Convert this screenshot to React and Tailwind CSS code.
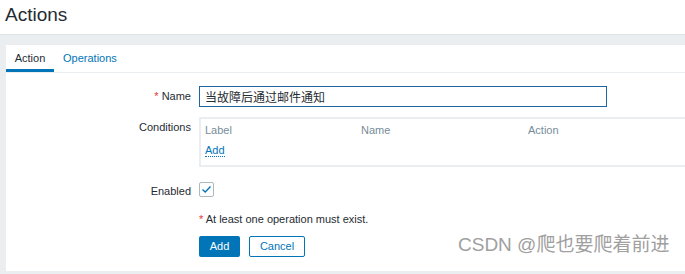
const App = () => {
  return (
    <div className="w-[685px] h-[274px] overflow-hidden bg-[#ebeef0] font-['Liberation_Sans',Arial,'Noto_Sans_CJK_SC',sans-serif] text-[11px] text-[#1f2c33]">
      <div className="h-[35px] bg-white border-b border-[#dfe4e7] pl-[5px] pt-[3px]">
        <h1 className="text-[19px] leading-[24px]">Actions</h1>
      </div>

      <div className="ml-[6px] mt-[10px] bg-white h-[226px] relative">
        {/* tabs */}
        <div className="flex h-[28px] border-b border-[#ebeef0]">
          <div className="w-[48px] flex items-center justify-center border-b-[3px] border-[#0275b8] pt-[3px]">
            Action
          </div>
          <div className="px-[9px] flex items-center text-[#0275b8]">Operations</div>
        </div>

        {/* form */}
        <div className="grid grid-cols-[185px_1fr] gap-x-[8px] mt-[13px]">
          <div className="text-right h-[21px] leading-[21px]">
            <span className="text-[#e33734]">*</span> Name
          </div>
          <div>
            <input
              type="text"
              defaultValue="当故障后通过邮件通知"
              className="w-[408px] h-[21px] border border-[#1f65a0] px-[5px] outline-none text-[12px] text-[#1f2c33]"
            />
          </div>

          <div className="text-right mt-[10px] leading-[21px] h-[21px]">Conditions</div>
          <div className="mt-[10px] border-2 border-[#ebeef0] border-r-0 h-[50px] px-[4px] pt-[3px]">
            <div className="grid grid-cols-[156px_167px_1fr] text-[#768d99]">
              <div>Label</div>
              <div>Name</div>
              <div>Action</div>
            </div>
            <div className="mt-[3px]">
              <span className="text-[#0275b8] border-b border-dotted border-[#0275b8]">Add</span>
            </div>
          </div>

          <div className="text-right mt-[16px] h-[16px] leading-[16px]">Enabled</div>
          <div className="mt-[15px]">
            <div className="w-[15px] h-[15px] border border-[#aeb9bf] rounded-[2px] flex items-center justify-center">
              <svg width="11" height="9" viewBox="0 0 11 9">
                <path d="M1.5 4.5 L4.2 7 L9.5 1.5" fill="none" stroke="#0275b8" strokeWidth="1.4" />
              </svg>
            </div>
          </div>

          <div />
          <div className="mt-[13px] leading-[14px]">
            <span className="text-[#e33734]">*</span> At least one operation must exist.
          </div>

          <div />
          <div className="mt-[10px] flex gap-[9px]">
            <button className="w-[41px] h-[21px] bg-[#0275b8] text-white rounded-[2px] text-[11px]">Add</button>
            <button className="w-[56px] h-[21px] bg-white border border-[#0275b8] text-[#0275b8] rounded-[2px] text-[11px]">Cancel</button>
          </div>
        </div>

        <div className="absolute left-[452px] top-[186px] text-[19px] text-[#a0a0a0] font-['Liberation_Sans','Noto_Sans_CJK_SC',sans-serif]">
          CSDN @爬也要爬着前进
        </div>
      </div>
    </div>
  );
};

export default App;
